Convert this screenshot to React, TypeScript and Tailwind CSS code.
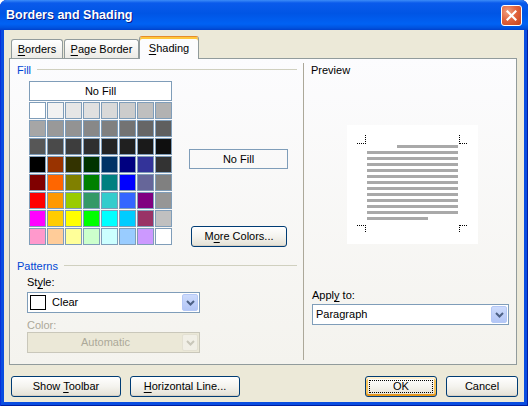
import React from "react";

// Office palette, 8 x 8. Class names written out so Tailwind picks them up.
const SWATCHES: string[][] = [
  ["bg-[#ffffff]", "bg-[#f2f2f2]", "bg-[#e6e6e6]", "bg-[#e0e0e0]", "bg-[#d9d9d9]", "bg-[#cccccc]", "bg-[#bfbfbf]", "bg-[#b2b2b2]"],
  ["bg-[#a6a6a6]", "bg-[#999999]", "bg-[#939393]", "bg-[#888888]", "bg-[#808080]", "bg-[#737373]", "bg-[#666666]", "bg-[#5f5f5f]"],
  ["bg-[#575757]", "bg-[#4a4a4a]", "bg-[#3d3d3d]", "bg-[#2f2f2f]", "bg-[#242424]", "bg-[#202020]", "bg-[#1a1a1a]", "bg-[#0f0f0f]"],
  ["bg-[#000000]", "bg-[#993300]", "bg-[#333300]", "bg-[#003300]", "bg-[#003366]", "bg-[#000080]", "bg-[#333399]", "bg-[#333333]"],
  ["bg-[#800000]", "bg-[#ff6600]", "bg-[#808000]", "bg-[#008000]", "bg-[#008080]", "bg-[#0000ff]", "bg-[#666699]", "bg-[#808080]"],
  ["bg-[#ff0000]", "bg-[#ff9900]", "bg-[#99cc00]", "bg-[#339966]", "bg-[#33cccc]", "bg-[#3366ff]", "bg-[#800080]", "bg-[#969696]"],
  ["bg-[#ff00ff]", "bg-[#ffcc00]", "bg-[#ffff00]", "bg-[#00ff00]", "bg-[#00ffff]", "bg-[#00ccff]", "bg-[#993366]", "bg-[#c0c0c0]"],
  ["bg-[#ff99cc]", "bg-[#ffcc99]", "bg-[#ffff99]", "bg-[#ccffcc]", "bg-[#ccffff]", "bg-[#99ccff]", "bg-[#cc99ff]", "bg-[#ffffff]"],
];

const Chevron = ({ color }: { color: string }) => (
  <svg width="9" height="6" viewBox="0 0 9 6" aria-hidden="true">
    <path d="M1 1 L4.5 4.5 L8 1" fill="none" stroke={color} strokeWidth="2" />
  </svg>
);

function Combo({
  children,
  className = "",
  disabled = false,
}: {
  children: React.ReactNode;
  className?: string;
  disabled?: boolean;
}) {
  return (
    <div
      className={`flex items-stretch h-[21px] border p-[1px] ${
        disabled ? "border-[#C9C7BA] bg-[#EBE8D7]" : "border-[#7F9DB9] bg-white"
      } ${className}`}
    >
      <div className="flex-1 flex items-center min-w-0">{children}</div>
      {disabled ? (
        <div className="w-[16px] rounded-[2px] border border-[#E3E0D2] bg-[#F1EFE6] flex items-center justify-center">
          <Chevron color="#C9C7BA" />
        </div>
      ) : (
        <div className="w-[16px] rounded-[2px] border border-[#B5C8F6] bg-linear-to-b from-[#CDDBFC] to-[#B3C6F6] flex items-center justify-center">
          <Chevron color="#4D6185" />
        </div>
      )}
    </div>
  );
}

function XPButton({
  children,
  className = "",
  isDefault = false,
}: {
  children: React.ReactNode;
  className?: string;
  isDefault?: boolean;
}) {
  return (
    <div
      className={`relative flex items-center justify-center h-[21px] rounded-[3px] border border-[#003C74] bg-linear-to-b from-white via-[#F4F3EE] to-[#E4E1D5] text-black ${
        isDefault
          ? "shadow-[inset_0_2px_0_#FFF0CF,inset_0_-2px_0_#E5971F,inset_2px_0_0_#F9C55A,inset_-2px_0_0_#F9C55A]"
          : "shadow-[inset_0_-1px_0_#D6D0C5]"
      } ${className}`}
    >
      {isDefault && <span className="absolute inset-[3px] border border-dotted border-black" />}
      <span className="relative">{children}</span>
    </div>
  );
}

function GroupHeader({ label }: { label: string }) {
  return (
    <div className="flex items-center h-[13px] pl-[7px] pr-[6px]">
      <span className="text-[#0046D5]">{label}</span>
      <div className="flex-1 h-px bg-[#D0D0BF] ml-[6px] mb-[3px]" />
    </div>
  );
}

function Preview() {
  const bars = Array.from({ length: 13 }, (_, i) => i);
  return (
    <svg width="131" height="119" viewBox="0 0 131 119" className="bg-white block" shapeRendering="crispEdges">
      <g stroke="#000" strokeWidth="1" strokeDasharray="1 1" fill="none">
        <line x1="10" y1="18.5" x2="18" y2="18.5" />
        <line x1="18.5" y1="10" x2="18.5" y2="19" />
        <line x1="112.5" y1="10" x2="112.5" y2="19" />
        <line x1="113" y1="18.5" x2="121" y2="18.5" />
        <line x1="10" y1="100.5" x2="18" y2="100.5" />
        <line x1="18.5" y1="100" x2="18.5" y2="108" />
        <line x1="112.5" y1="100" x2="112.5" y2="108" />
        <line x1="113" y1="100.5" x2="121" y2="100.5" />
      </g>
      {bars.map((i) => {
        const x = i === 0 ? 50 : 20;
        const w = i === 0 || i === 12 ? 61 : 91;
        return <rect key={i} x={x} y={20 + i * 6} width={w} height={3} fill="#A9A9A9" />;
      })}
    </svg>
  );
}

export default function App() {
  return (
    <div className="w-[528px] h-[406px] flex flex-col rounded-t-[7px] overflow-hidden bg-[#0A4DE0] shadow-[inset_1px_0_0_#0831D9,inset_-1px_0_0_#001EA0,inset_0_-1px_0_#001EA0] font-['Liberation_Sans',Arial,sans-serif] text-[11px] leading-[13px] text-black select-none">
      {/* Title bar */}
      <div className="h-[30px] shrink-0 flex items-center pl-[6px] pr-[6px] bg-[linear-gradient(to_bottom,#3C8CF8_0%,#0A5AEB_10%,#0055E5_45%,#0062F4_80%,#0052DE_93%,#0041CC_100%)]">
        <span className="flex-1 text-white font-bold text-[12.5px] leading-[16px] [text-shadow:1px_1px_#0A1883]">
          Borders and Shading
        </span>
        <div className="w-[21px] h-[21px] rounded-[3px] border border-white bg-[radial-gradient(circle_at_30%_30%,#F0A080_0%,#E2653F_45%,#C8411A_100%)] flex items-center justify-center">
          <svg width="11" height="11" viewBox="0 0 11 11" aria-hidden="true">
            <path d="M1.5 1.5 L9.5 9.5 M9.5 1.5 L1.5 9.5" stroke="#fff" strokeWidth="2.2" strokeLinecap="square" />
          </svg>
        </div>
      </div>

      {/* Client area */}
      <div className="flex-1 mx-[4px] mb-[4px] bg-[#ECE9D8] flex flex-col">
        {/* Tabs */}
        <div className="flex items-end h-[22px] mt-[6px] ml-[7px]">
          <div className="w-[52px] h-[19px] border border-b-0 border-[#919B9C] rounded-t-[3px] bg-linear-to-b from-white to-[#ECEBE6] flex justify-center pt-[3px]">
            <span>
              <u className="underline-offset-[2px]">B</u>orders
            </span>
          </div>
          <div className="w-[75px] h-[19px] ml-[1px] border border-b-0 border-[#919B9C] rounded-t-[3px] bg-linear-to-b from-white to-[#ECEBE6] flex justify-center pt-[3px]">
            <span>
              <u className="underline-offset-[2px]">P</u>age Border
            </span>
          </div>
          <div className="relative z-10 w-[60px] h-[23px] -mb-px border border-b-0 border-[#919B9C] border-t-[#E68B2C] rounded-t-[3px] bg-[#FCFCFE] shadow-[inset_0_2px_0_#FFC73C] flex justify-center pt-[5px]">
            <span>
              <u className="underline-offset-[2px]">S</u>hading
            </span>
          </div>
        </div>

        {/* Tab panel */}
        <div className="ml-[5px] w-[508px] h-[307px] border border-[#919B9C] bg-linear-to-b from-[#FCFCFE] to-[#F4F3EE] flex">
          {/* Left column */}
          <div className="w-[293px] flex flex-col">
            <div className="mt-[5px]">
              <GroupHeader label="Fill" />
            </div>
            <div className="flex mt-[4px] ml-[19px]">
              <div className="w-[143px] flex flex-col gap-[1px]">
                <div className="h-[20px] border border-[#7F9DB9] bg-white flex items-center justify-center">No Fill</div>
                <div className="grid grid-cols-8 gap-[1px]">
                  {SWATCHES.flat().map((c, i) => (
                    <div key={i} className={`w-[17px] h-[17px] border border-[#7F9DB9] ${c}`} />
                  ))}
                </div>
              </div>
              <div className="ml-[17px] flex flex-col">
                <div className="mt-[68px] w-[99px] h-[20px] border border-[#7F9DB9] flex items-center justify-center">
                  No Fill
                </div>
                <XPButton className="mt-[57px] ml-[2px] w-[96px] h-[20px]">
                  M<u className="underline-offset-[2px]">o</u>re Colors...
                </XPButton>
              </div>
            </div>

            <div className="mt-[13px]">
              <GroupHeader label="Patterns" />
            </div>
            <div className="mt-[3px] pl-[17px]">
              St<u className="underline-offset-[2px]">y</u>le:
            </div>
            <Combo className="mt-[3px] ml-[17px] w-[173px]">
              <div className="ml-[1px] w-[16px] h-[15px] border border-black bg-white" />
              <span className="ml-[6px]">Clear</span>
            </Combo>
            <div className="mt-[6px] pl-[17px] text-[#ACA899]">Color:</div>
            <Combo className="ml-[17px] w-[173px]" disabled>
              <span className="flex-1 text-center text-[#ACA899]">Automatic</span>
            </Combo>
          </div>

          {/* Separator */}
          <div className="w-px my-[4px] bg-[#ACA899]" />

          {/* Right column */}
          <div className="flex-1 flex flex-col">
            <div className="mt-[5px] pl-[7px]">Preview</div>
            <div className="mt-[48px] ml-[43px]">
              <Preview />
            </div>
            <div className="mt-[45px] pl-[8px]">
              Appl<u className="underline-offset-[2px]">y</u> to:
            </div>
            <Combo className="mt-[2px] ml-[8px] w-[197px]">
              <span className="pl-[2px]">Paragraph</span>
            </Combo>
          </div>
        </div>

        {/* Bottom buttons */}
        <div className="flex mt-[11px] ml-[7px] mr-[6px]">
          <XPButton className="w-[110px]">
            Show <u className="underline-offset-[2px]">T</u>oolbar
          </XPButton>
          <XPButton className="w-[110px] ml-[9px]">
            <u className="underline-offset-[2px]">H</u>orizontal Line...
          </XPButton>
          <div className="flex-1" />
          <XPButton className="w-[72px]" isDefault>
            OK
          </XPButton>
          <XPButton className="w-[72px] ml-[9px]">Cancel</XPButton>
        </div>
      </div>
    </div>
  );
}
